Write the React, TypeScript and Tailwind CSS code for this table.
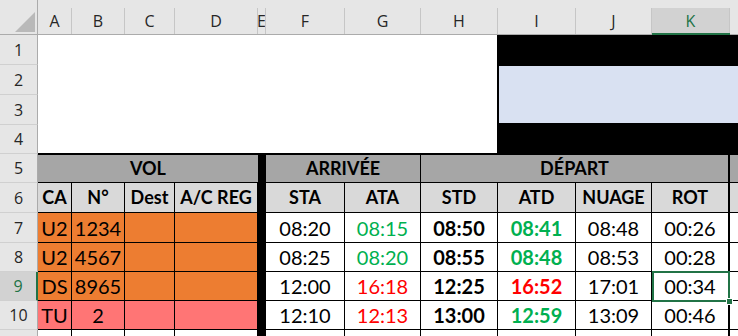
import React from "react";
import { twMerge } from "tailwind-merge";

type Flight = {
  row: number;
  ca: string;
  num: string;
  pink?: boolean;
  sta: string;
  ata: string;
  ataLate?: boolean;
  std: string;
  atd: string;
  atdLate?: boolean;
  nuage: string;
  rot: string;
};

const flights: Flight[] = [
  { row: 7, ca: "U2", num: "1234", sta: "08:20", ata: "08:15", std: "08:50", atd: "08:41", nuage: "08:48", rot: "00:26" },
  { row: 8, ca: "U2", num: "4567", sta: "08:25", ata: "08:20", std: "08:55", atd: "08:48", nuage: "08:53", rot: "00:28" },
  { row: 9, ca: "DS", num: "8965", sta: "12:00", ata: "16:18", ataLate: true, std: "12:25", atd: "16:52", atdLate: true, nuage: "17:01", rot: "00:34" },
  { row: 10, ca: "TU", num: "2", pink: true, sta: "12:10", ata: "12:13", ataLate: true, std: "13:00", atd: "12:59", nuage: "13:09", rot: "00:46" },
];

// L is only a sliver at the right edge, so its letter stays hidden
const letters = ["A", "B", "C", "D", "E", "F", "G", "H", "I", "J", "K", ""];
const activeRow = 9;

const ColHead = ({ label, active }: { label: string; active?: boolean }) => (
  <div
    className={twMerge(
      "bg-[#e6e6e6] pt-2 border-b border-[#ababab]",
      active && "border-b-2 border-[#217346]"
    )}
  >
    <div
      className={twMerge(
        "flex h-full items-center justify-center overflow-hidden border-r border-[#c6c6c6] text-[#262626]",
        active && "bg-[#d2d2d2] text-[#217346]"
      )}
    >
      {label}
    </div>
  </div>
);

const RowHead = ({ n }: { n?: number }) => (
  <div
    className={twMerge(
      "flex items-center justify-center border-b border-r border-b-[#d0d0d0] border-r-[#ababab] bg-[#e6e6e6] text-[#262626]",
      n === activeRow && "border-r-2 border-r-[#217346] bg-[#d2d2d2] text-[#217346]"
    )}
  >
    {n}
  </div>
);

const Cell = ({ children, className }: { children?: React.ReactNode; className?: string }) => (
  <div
    className={twMerge(
      "relative flex items-center justify-center border-b border-r border-black bg-white text-[20px] leading-none text-black [font-family:Lato,sans-serif]",
      className
    )}
  >
    {children}
  </div>
);

const Head = ({ children, className }: { children?: React.ReactNode; className?: string }) => (
  <Cell className={twMerge("bg-[#d9d9d9] text-[18px] font-bold", className)}>{children}</Cell>
);

export default function App() {
  return (
    <div className="h-[336px] w-[738px] overflow-hidden bg-white">
      <div className="grid grid-cols-[38px_34px_53px_50px_83px_8px_79px_76px_77px_78px_76px_78px_40px] grid-rows-[35px_30px_30px_30px_29px_29px_30px_30px_29px_29px_29px_29px] text-[16px] [font-family:'Open_Sans',sans-serif]">
        {/* column letters */}
        <div className="flex items-end justify-end border-b border-r border-[#ababab] bg-[#e6e6e6] pb-[2px] pr-[2px]">
          <svg width="20" height="20" viewBox="0 0 20 20">
            <polygon points="20,0 20,20 0,20" fill="#b9b9b9" />
          </svg>
        </div>
        {letters.map((l, i) => (
          <ColHead key={i} label={l} active={l === "K"} />
        ))}

        {/* rows 1-4: title block */}
        <RowHead n={1} />
        <div className="col-span-8 row-span-4 border-b border-r border-black bg-white" />
        <div className="col-span-4 row-span-4 flex flex-col bg-black pl-px">
          <div className="h-[31px]" />
          <div className="h-[57px] bg-[#d9e1f2]" />
        </div>
        <RowHead n={2} />
        <RowHead n={3} />
        <RowHead n={4} />

        {/* row 5: groups */}
        <RowHead n={5} />
        <Cell className="col-span-4 border-t border-r-0 bg-[#a6a6a6] text-[18px] font-bold">VOL</Cell>
        <div className="row-span-7 bg-black" />
        <Cell className="col-span-2 border-t bg-[#a6a6a6] text-[18px] font-bold">ARRIVÉE</Cell>
        <Cell className="col-span-4 border-t border-r-2 bg-[#a6a6a6] text-[18px] font-bold">DÉPART</Cell>
        <Cell className="border-t border-r-0 bg-[#a6a6a6]" />

        {/* row 6: column titles */}
        <RowHead n={6} />
        <Head>CA</Head>
        <Head>N°</Head>
        <Head>Dest</Head>
        <Head>A/C REG</Head>
        <Head>STA</Head>
        <Head>ATA</Head>
        <Head>STD</Head>
        <Head>ATD</Head>
        <Head>NUAGE</Head>
        <Head className="border-r-2">ROT</Head>
        <Head className="border-r-0" />

        {/* flights */}
        {flights.map((f) => {
          const fill = f.pink ? "bg-[#ff7575]" : "bg-[#ed7d31]";
          return (
            <React.Fragment key={f.row}>
              <RowHead n={f.row} />
              <Cell className={fill}>{f.ca}</Cell>
              <Cell className={fill}>{f.num}</Cell>
              <Cell className={fill} />
              <Cell className={fill} />
              <Cell>{f.sta}</Cell>
              <Cell className={f.ataLate ? "text-[#ff0000]" : "text-[#00b050]"}>{f.ata}</Cell>
              <Cell className="font-bold">{f.std}</Cell>
              <Cell className={twMerge("font-bold", f.atdLate ? "text-[#ff0000]" : "text-[#00b050]")}>{f.atd}</Cell>
              <Cell>{f.nuage}</Cell>
              <Cell className="border-r-2">
                {f.rot}
                {f.row === activeRow && (
                  <div className="absolute bottom-[-2px] left-0 right-[-2px] top-[-1px] z-10 border-2 border-[#217346]">
                    <div className="absolute bottom-[-5px] right-[-5px] h-[7px] w-[7px] border border-white bg-[#217346]" />
                  </div>
                )}
              </Cell>
              <Cell className="border-r-0" />
            </React.Fragment>
          );
        })}

        {/* row 11, cut off by the window */}
        <RowHead />
        <Cell className="border-b-0" />
        <Cell className="border-b-0" />
        <Cell className="border-b-0" />
        <Cell className="border-b-0" />
        <Cell className="border-b-0" />
        <Cell className="border-b-0" />
        <Cell className="border-b-0" />
        <Cell className="border-b-0" />
        <Cell className="border-b-0" />
        <Cell className="border-b-0 border-r-2" />
        <Cell className="border-0" />
      </div>
    </div>
  );
}
